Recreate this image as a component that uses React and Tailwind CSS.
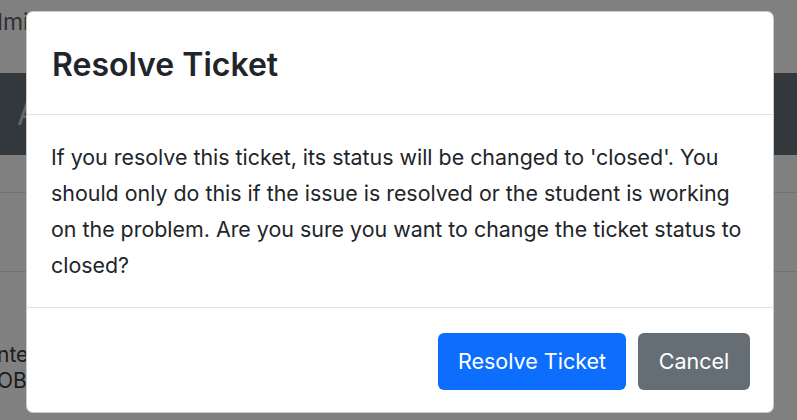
export default function App() {
  return (
    <div
      className="relative w-[797px] h-[420px] overflow-hidden bg-[#808080]"
      style={{ fontFamily: "Inter, 'Liberation Sans', sans-serif" }}
    >
      {/* page behind the backdrop */}
      <div className="h-[73px] pt-[8px]">
        <div className="-ml-[27px] text-[23px] leading-[28px] text-[#2f2f2f]">Admin</div>
      </div>
      <div className="h-[82px] bg-[#32383c] flex items-center">
        <div className="ml-[17px] text-[32px] text-[#62676b]">A</div>
      </div>
      <div className="h-[38px] border-b border-[#727272]" />
      <div className="h-[79px] border-b border-[#727272]" />
      <div className="pt-[70px] text-[21px] leading-[26px] text-[#1c1c1c]">
        <div className="-ml-[3px]">nted</div>
        <div className="-ml-[15px]">JOB</div>
      </div>

      {/* modal */}
      <div className="absolute left-[26px] top-[11px] w-[748px] h-[402px] bg-white rounded-[7px] border border-black/20 flex flex-col">
        <div className="h-[103px] px-[25px] flex items-center border-b border-[#dee2e6]">
          <h5 className="text-[32px] font-semibold text-[#212529] pt-[3px]">Resolve Ticket</h5>
        </div>
        <div className="px-[24px] py-[24px] text-[21.4px] leading-[36px] text-[#212529] border-b border-[#dee2e6]">
          If you resolve this ticket, its status will be changed to 'closed'. You should only do this if the issue is resolved or the student is working on the problem. Are you sure you want to change the ticket status to closed?
        </div>
        <div className="flex-1 flex justify-end items-start gap-[12px] pt-[25px] pr-[23px]">
          <button className="h-[57px] w-[188px] rounded-[6px] bg-[#0d6efd] text-white text-[21.5px]">
            Resolve Ticket
          </button>
          <button className="h-[57px] w-[112px] rounded-[6px] bg-[#646e74] text-white text-[21.5px]">
            Cancel
          </button>
        </div>
      </div>
    </div>
  );
}
